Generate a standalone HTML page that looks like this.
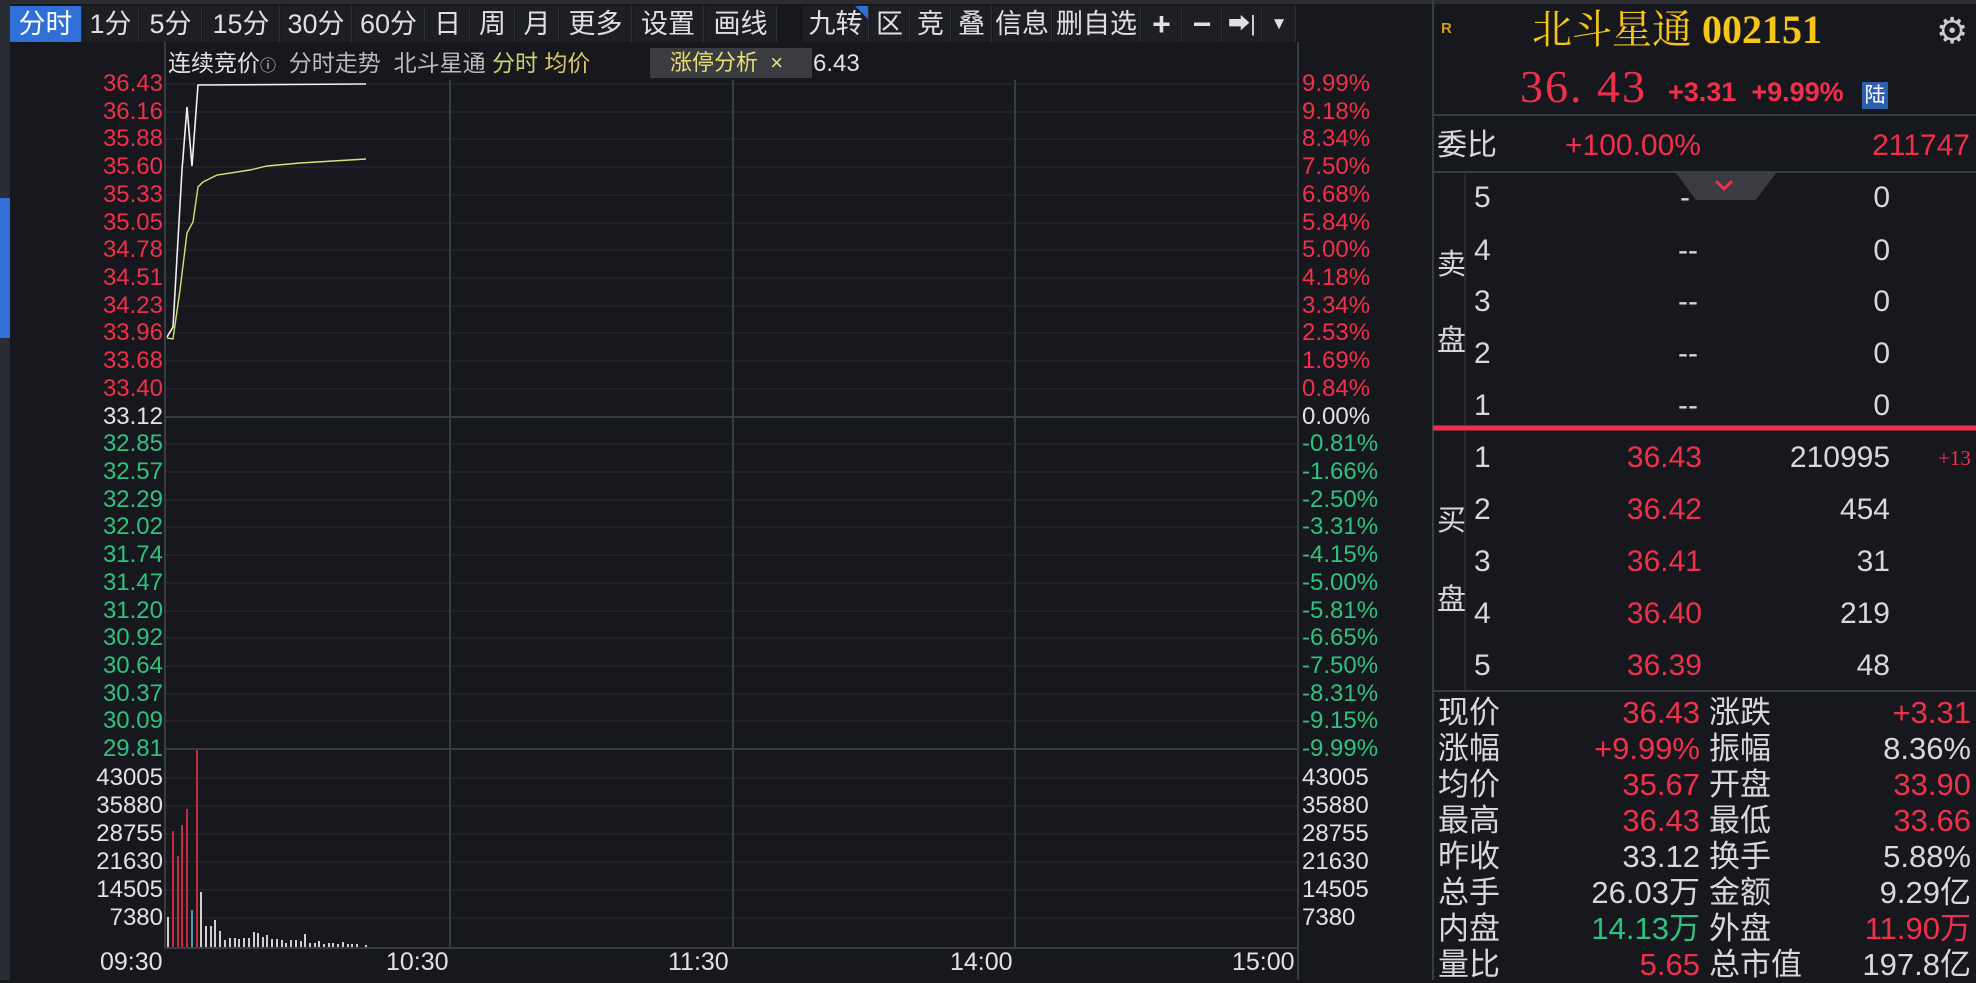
<!DOCTYPE html>
<html><head><meta charset="utf-8"><style>
*{margin:0;padding:0;box-sizing:border-box}
body{width:1976px;height:980px;background:#17181d;position:relative;overflow:hidden;font-family:"Liberation Sans","Noto Sans CJK SC",sans-serif;color:#d8d8d8}
.a{position:absolute;white-space:nowrap}
.tb{position:absolute;top:6px;height:36px;line-height:36px;font-size:27px;color:#e0e0e0;text-align:center;background:#1d1f25;border-right:1px solid #30323a}
.r{color:#f0304a}.g{color:#2ec27e}.w{color:#e2e2e2}
.pl{position:absolute;left:40px;width:123px;text-align:right;font-size:24px;height:26px;line-height:26px}
.pr{position:absolute;left:1302px;font-size:24px;height:26px;line-height:26px}
.ob{position:absolute;font-size:30px;height:34px;line-height:34px}
.st{position:absolute;font-size:31px;height:36px;line-height:36px}
</style></head><body>
<div class="a" style="left:0;top:0;width:10px;height:980px;background:#2a2c33"></div>
<div class="a" style="left:0;top:198px;width:10px;height:140px;background:#2f6fd6"></div>
<div class="a" style="left:0;top:0;width:1976px;height:4px;background:#2a2c32"></div>
<div class="tb" style="left:10px;width:72px;background:#2f6fd6;color:#fff">分时</div>
<div class="tb" style="left:83px;width:56px">1分</div>
<div class="tb" style="left:140px;width:62px">5分</div>
<div class="tb" style="left:203px;width:77px">15分</div>
<div class="tb" style="left:281px;width:71px">30分</div>
<div class="tb" style="left:353px;width:72px">60分</div>
<div class="tb" style="left:426px;width:44px">日</div>
<div class="tb" style="left:471px;width:44px">周</div>
<div class="tb" style="left:516px;width:43px">月</div>
<div class="tb" style="left:560px;width:72px">更多</div>
<div class="tb" style="left:633px;width:71px">设置</div>
<div class="tb" style="left:705px;width:72px">画线</div>
<div class="tb" style="left:803px;width:66px">九转<span style="position:absolute;right:0;top:0;width:0;height:0;border-left:13px solid transparent;border-top:13px solid #2f6fd6"></span></div>
<div class="tb" style="left:870px;width:40px">区</div>
<div class="tb" style="left:911px;width:40px">竞</div>
<div class="tb" style="left:952px;width:40px">叠</div>
<div class="tb" style="left:993px;width:59px">信息</div>
<div class="tb" style="left:1053px;width:88px">删自选</div>
<div class="tb" style="left:1142px;width:40px;font-weight:bold;font-size:32px">+</div>
<div class="tb" style="left:1183px;width:39px;font-weight:bold;font-size:32px">−</div>
<div class="tb" style="left:1223px;width:39px;font-size:22px">➡|</div>
<div class="tb" style="left:1263px;width:33px;font-size:17px">▼</div>
<div class="a" style="left:168px;top:48px;font-size:23px;line-height:30px"><span class="w">连续竞价</span><span style="font-size:16px">ⓘ</span>&nbsp; <span style="color:#bbb">分时走势 &nbsp;北斗星通</span> <span style="color:#c8d46a">分时</span> <span style="color:#d8c66a">均价</span></div>
<div class="a" style="left:650px;top:48px;width:162px;height:30px;background:#3a3c42;font-size:22px;line-height:30px;color:#e8e070;padding-left:20px">涨停分析 &nbsp;<span style="color:#e8e070">×</span></div>
<div class="a w" style="left:813px;top:49px;font-size:24px;line-height:30px">6.43</div>
<svg class="a" style="left:0;top:0" width="1976" height="980">
<g stroke="#2a2c33" stroke-width="1">
<line x1="165" y1="84" x2="1298" y2="84"/><line x1="165" y1="112" x2="1298" y2="112"/><line x1="165" y1="139" x2="1298" y2="139"/><line x1="165" y1="167" x2="1298" y2="167"/><line x1="165" y1="195" x2="1298" y2="195"/><line x1="165" y1="223" x2="1298" y2="223"/><line x1="165" y1="250" x2="1298" y2="250"/><line x1="165" y1="278" x2="1298" y2="278"/><line x1="165" y1="306" x2="1298" y2="306"/><line x1="165" y1="333" x2="1298" y2="333"/><line x1="165" y1="361" x2="1298" y2="361"/><line x1="165" y1="389" x2="1298" y2="389"/><line x1="165" y1="444" x2="1298" y2="444"/><line x1="165" y1="472" x2="1298" y2="472"/><line x1="165" y1="500" x2="1298" y2="500"/><line x1="165" y1="527" x2="1298" y2="527"/><line x1="165" y1="555" x2="1298" y2="555"/><line x1="165" y1="583" x2="1298" y2="583"/><line x1="165" y1="611" x2="1298" y2="611"/><line x1="165" y1="638" x2="1298" y2="638"/><line x1="165" y1="666" x2="1298" y2="666"/><line x1="165" y1="694" x2="1298" y2="694"/><line x1="165" y1="721" x2="1298" y2="721"/>
<line x1="165" y1="778" x2="1298" y2="778"/><line x1="165" y1="806" x2="1298" y2="806"/><line x1="165" y1="834" x2="1298" y2="834"/><line x1="165" y1="862" x2="1298" y2="862"/><line x1="165" y1="890" x2="1298" y2="890"/><line x1="165" y1="918" x2="1298" y2="918"/>
</g>
<g stroke="#3a3c44" stroke-width="2">
<line x1="165" y1="417" x2="1298" y2="417"/><line x1="165" y1="749" x2="1298" y2="749"/><line x1="165" y1="948" x2="1298" y2="948"/>
<line x1="450" y1="80" x2="450" y2="948"/><line x1="733" y1="80" x2="733" y2="948"/><line x1="1015" y1="80" x2="1015" y2="948"/>
<line x1="165" y1="42" x2="165" y2="948"/><line x1="1298" y1="42" x2="1298" y2="980"/>
</g>
<polyline fill="none" stroke="#f0f0f0" stroke-width="1.6" points="167,337 173,327 182,170 187,107 192,166 198,85 366,84"/>
<polyline fill="none" stroke="#d8e07a" stroke-width="1.4" points="167,338 173,339 180,290 187,233 193,222 198,187 203,182 217,175 250,170 267,166 300,163 366,159"/>
<g stroke-width="1.6">
<line x1="168" y1="947" x2="168" y2="917" stroke="#fff"/>
<line x1="173" y1="947" x2="173" y2="831" stroke="#f0304a"/>
<line x1="178" y1="947" x2="178" y2="856" stroke="#f0304a"/>
<line x1="182" y1="947" x2="182" y2="825" stroke="#f0304a"/>
<line x1="187" y1="947" x2="187" y2="809" stroke="#f0304a"/>
<line x1="192" y1="947" x2="192" y2="910" stroke="#5fb6d6"/>
<line x1="197" y1="947" x2="197" y2="750" stroke="#f0304a"/>
<g stroke="#fff">
<line x1="201" y1="947" x2="201" y2="892"/><line x1="206" y1="947" x2="206" y2="926"/><line x1="211" y1="947" x2="211" y2="926"/><line x1="215" y1="947" x2="215" y2="920"/><line x1="220" y1="947" x2="220" y2="931"/><line x1="225" y1="947" x2="225" y2="940"/><line x1="230" y1="947" x2="230" y2="938"/><line x1="235" y1="947" x2="235" y2="938"/><line x1="239" y1="947" x2="239" y2="939"/><line x1="244" y1="947" x2="244" y2="938"/><line x1="249" y1="947" x2="249" y2="938"/><line x1="254" y1="947" x2="254" y2="932"/><line x1="258" y1="947" x2="258" y2="933"/><line x1="263" y1="947" x2="263" y2="937"/><line x1="267" y1="947" x2="267" y2="935"/><line x1="272" y1="947" x2="272" y2="939"/><line x1="277" y1="947" x2="277" y2="939"/><line x1="282" y1="947" x2="282" y2="940"/><line x1="286" y1="947" x2="286" y2="943"/><line x1="291" y1="947" x2="291" y2="940"/><line x1="296" y1="947" x2="296" y2="940"/><line x1="301" y1="947" x2="301" y2="941"/><line x1="305" y1="947" x2="305" y2="934"/><line x1="310" y1="947" x2="310" y2="943"/><line x1="315" y1="947" x2="315" y2="943"/><line x1="319" y1="947" x2="319" y2="941"/><line x1="324" y1="947" x2="324" y2="944"/><line x1="329" y1="947" x2="329" y2="943"/><line x1="333" y1="947" x2="333" y2="943"/><line x1="338" y1="947" x2="338" y2="944"/><line x1="343" y1="947" x2="343" y2="942"/><line x1="348" y1="947" x2="348" y2="944"/><line x1="352" y1="947" x2="352" y2="944"/><line x1="357" y1="947" x2="357" y2="944"/><line x1="366" y1="947" x2="366" y2="945"/>
</g></g>
<g stroke="#3a3c44" stroke-width="2">
<line x1="1433" y1="0" x2="1433" y2="980"/>
<line x1="1433" y1="115" x2="1976" y2="115"/>
<line x1="1433" y1="172" x2="1976" y2="172"/>
<line x1="1433" y1="691" x2="1976" y2="691"/>
<line x1="1465" y1="172" x2="1465" y2="426" stroke-width="1"/>
<line x1="1465" y1="431" x2="1465" y2="691" stroke-width="1"/>
</g>
<line x1="1433" y1="428" x2="1976" y2="428" stroke="#f0304a" stroke-width="5"/>
<polygon points="1676,173 1776,173 1756,200 1696,200" fill="#3a3c42"/>
<polyline points="1716,181 1724,189 1732,181" fill="none" stroke="#f0304a" stroke-width="3"/>
</svg>
<div class="pl r" style="top:71px">36.43</div><div class="pl r" style="top:99px">36.16</div><div class="pl r" style="top:126px">35.88</div><div class="pl r" style="top:154px">35.60</div><div class="pl r" style="top:182px">35.33</div><div class="pl r" style="top:210px">35.05</div><div class="pl r" style="top:237px">34.78</div><div class="pl r" style="top:265px">34.51</div><div class="pl r" style="top:293px">34.23</div><div class="pl r" style="top:320px">33.96</div><div class="pl r" style="top:348px">33.68</div><div class="pl r" style="top:376px">33.40</div><div class="pl w" style="top:404px">33.12</div><div class="pl g" style="top:431px">32.85</div><div class="pl g" style="top:459px">32.57</div><div class="pl g" style="top:487px">32.29</div><div class="pl g" style="top:514px">32.02</div><div class="pl g" style="top:542px">31.74</div><div class="pl g" style="top:570px">31.47</div><div class="pl g" style="top:598px">31.20</div><div class="pl g" style="top:625px">30.92</div><div class="pl g" style="top:653px">30.64</div><div class="pl g" style="top:681px">30.37</div><div class="pl g" style="top:708px">30.09</div><div class="pl g" style="top:736px">29.81</div>
<div class="pl w" style="top:765px">43005</div><div class="pl w" style="top:793px">35880</div><div class="pl w" style="top:821px">28755</div><div class="pl w" style="top:849px">21630</div><div class="pl w" style="top:877px">14505</div><div class="pl w" style="top:905px">7380</div>
<div class="pr r" style="top:71px">9.99%</div><div class="pr r" style="top:99px">9.18%</div><div class="pr r" style="top:126px">8.34%</div><div class="pr r" style="top:154px">7.50%</div><div class="pr r" style="top:182px">6.68%</div><div class="pr r" style="top:210px">5.84%</div><div class="pr r" style="top:237px">5.00%</div><div class="pr r" style="top:265px">4.18%</div><div class="pr r" style="top:293px">3.34%</div><div class="pr r" style="top:320px">2.53%</div><div class="pr r" style="top:348px">1.69%</div><div class="pr r" style="top:376px">0.84%</div><div class="pr w" style="top:404px">0.00%</div><div class="pr g" style="top:431px">-0.81%</div><div class="pr g" style="top:459px">-1.66%</div><div class="pr g" style="top:487px">-2.50%</div><div class="pr g" style="top:514px">-3.31%</div><div class="pr g" style="top:542px">-4.15%</div><div class="pr g" style="top:570px">-5.00%</div><div class="pr g" style="top:598px">-5.81%</div><div class="pr g" style="top:625px">-6.65%</div><div class="pr g" style="top:653px">-7.50%</div><div class="pr g" style="top:681px">-8.31%</div><div class="pr g" style="top:708px">-9.15%</div><div class="pr g" style="top:736px">-9.99%</div>
<div class="pr w" style="top:765px">43005</div><div class="pr w" style="top:793px">35880</div><div class="pr w" style="top:821px">28755</div><div class="pr w" style="top:849px">21630</div><div class="pr w" style="top:877px">14505</div><div class="pr w" style="top:905px">7380</div>
<div class="a w" style="left:100px;top:948px;font-size:25px">09:30</div>
<div class="a w" style="left:386px;top:948px;font-size:25px">10:30</div>
<div class="a w" style="left:668px;top:948px;font-size:25px">11:30</div>
<div class="a w" style="left:950px;top:948px;font-size:25px">14:00</div>
<div class="a w" style="left:1232px;top:948px;font-size:25px">15:00</div>
<div class="a" style="left:1441px;top:20px;font-size:15px;font-weight:bold;color:#d89a20">R</div>
<div class="a" style="left:1532px;top:4px;font-size:40px;line-height:52px;color:#f5c518;font-family:'Liberation Serif','Noto Serif CJK SC',serif">北斗星通 <b>002151</b></div>
<div class="a" style="left:1936px;top:10px;font-size:36px;color:#ccc">⚙</div>
<div class="a r" style="left:1520px;top:62px;font-size:46px;line-height:50px;font-family:'Liberation Serif',serif;letter-spacing:2px">36.&nbsp;43</div>
<div class="a r" style="left:1668px;top:77px;font-size:27px;line-height:30px;font-weight:bold">+3.31 &nbsp;+9.99%</div>
<div class="a" style="left:1862px;top:82px;width:26px;height:27px;background:#2e5fae;color:#fff;font-size:21px;line-height:27px;text-align:center">陆</div>
<div class="a" style="left:1437px;top:128px;font-size:30px;line-height:36px">委比</div>
<div class="a r" style="left:1565px;top:128px;font-size:30px;line-height:36px">+100.00%</div>
<div class="a r" style="left:1840px;width:130px;text-align:right;top:128px;font-size:30px;line-height:36px">211747</div>
<div class="a" style="left:1437px;top:247px;font-size:29px;line-height:36px">卖</div>
<div class="a" style="left:1437px;top:323px;font-size:29px;line-height:36px">盘</div>
<div class="a" style="left:1437px;top:503px;font-size:29px;line-height:36px">买</div>
<div class="a" style="left:1437px;top:582px;font-size:29px;line-height:36px">盘</div>
<div class="ob" style="left:1474px;top:181px">5</div><div class="ob" style="left:1474px;top:234px">4</div><div class="ob" style="left:1474px;top:285px">3</div><div class="ob" style="left:1474px;top:337px">2</div><div class="ob" style="left:1474px;top:389px">1</div>
<div class="ob" style="left:1680px;top:181px">-</div><div class="ob" style="left:1678px;top:234px">--</div><div class="ob" style="left:1678px;top:285px">--</div><div class="ob" style="left:1678px;top:337px">--</div><div class="ob" style="left:1678px;top:389px">--</div>
<div class="ob" style="left:1790px;width:100px;text-align:right;top:181px">0</div><div class="ob" style="left:1790px;width:100px;text-align:right;top:234px">0</div><div class="ob" style="left:1790px;width:100px;text-align:right;top:285px">0</div><div class="ob" style="left:1790px;width:100px;text-align:right;top:337px">0</div><div class="ob" style="left:1790px;width:100px;text-align:right;top:389px">0</div>
<div class="ob" style="left:1474px;top:441px">1</div><div class="ob" style="left:1474px;top:493px">2</div><div class="ob" style="left:1474px;top:545px">3</div><div class="ob" style="left:1474px;top:597px">4</div><div class="ob" style="left:1474px;top:649px">5</div>
<div class="ob r" style="left:1592px;width:110px;text-align:right;top:441px">36.43</div><div class="ob r" style="left:1592px;width:110px;text-align:right;top:493px">36.42</div><div class="ob r" style="left:1592px;width:110px;text-align:right;top:545px">36.41</div><div class="ob r" style="left:1592px;width:110px;text-align:right;top:597px">36.40</div><div class="ob r" style="left:1592px;width:110px;text-align:right;top:649px">36.39</div>
<div class="ob" style="left:1740px;width:150px;text-align:right;top:441px">210995</div><div class="ob" style="left:1740px;width:150px;text-align:right;top:493px">454</div><div class="ob" style="left:1740px;width:150px;text-align:right;top:545px">31</div><div class="ob" style="left:1740px;width:150px;text-align:right;top:597px">219</div><div class="ob" style="left:1740px;width:150px;text-align:right;top:649px">48</div>
<div class="a r" style="left:1938px;top:446px;font-size:21px;line-height:24px;font-family:'Liberation Serif',serif">+13</div>
<div class="st" style="left:1438px;top:695px">现价</div><div class="st r" style="left:1560px;width:140px;text-align:right;top:695px">36.43</div><div class="st" style="left:1709px;top:695px">涨跌</div><div class="st r" style="left:1800px;width:171px;text-align:right;top:695px">+3.31</div>
<div class="st" style="left:1438px;top:731px">涨幅</div><div class="st r" style="left:1560px;width:140px;text-align:right;top:731px">+9.99%</div><div class="st" style="left:1709px;top:731px">振幅</div><div class="st" style="left:1800px;width:171px;text-align:right;top:731px">8.36%</div>
<div class="st" style="left:1438px;top:767px">均价</div><div class="st r" style="left:1560px;width:140px;text-align:right;top:767px">35.67</div><div class="st" style="left:1709px;top:767px">开盘</div><div class="st r" style="left:1800px;width:171px;text-align:right;top:767px">33.90</div>
<div class="st" style="left:1438px;top:803px">最高</div><div class="st r" style="left:1560px;width:140px;text-align:right;top:803px">36.43</div><div class="st" style="left:1709px;top:803px">最低</div><div class="st r" style="left:1800px;width:171px;text-align:right;top:803px">33.66</div>
<div class="st" style="left:1438px;top:839px">昨收</div><div class="st" style="left:1560px;width:140px;text-align:right;top:839px">33.12</div><div class="st" style="left:1709px;top:839px">换手</div><div class="st" style="left:1800px;width:171px;text-align:right;top:839px">5.88%</div>
<div class="st" style="left:1438px;top:875px">总手</div><div class="st" style="left:1530px;width:170px;text-align:right;top:875px">26.03万</div><div class="st" style="left:1709px;top:875px">金额</div><div class="st" style="left:1800px;width:171px;text-align:right;top:875px">9.29亿</div>
<div class="st" style="left:1438px;top:911px">内盘</div><div class="st g" style="left:1530px;width:170px;text-align:right;top:911px">14.13万</div><div class="st" style="left:1709px;top:911px">外盘</div><div class="st r" style="left:1800px;width:171px;text-align:right;top:911px">11.90万</div>
<div class="st" style="left:1438px;top:947px">量比</div><div class="st r" style="left:1560px;width:140px;text-align:right;top:947px">5.65</div><div class="st" style="left:1709px;top:947px">总市值</div><div class="st" style="left:1800px;width:171px;text-align:right;top:947px">197.8亿</div>
</body></html>
